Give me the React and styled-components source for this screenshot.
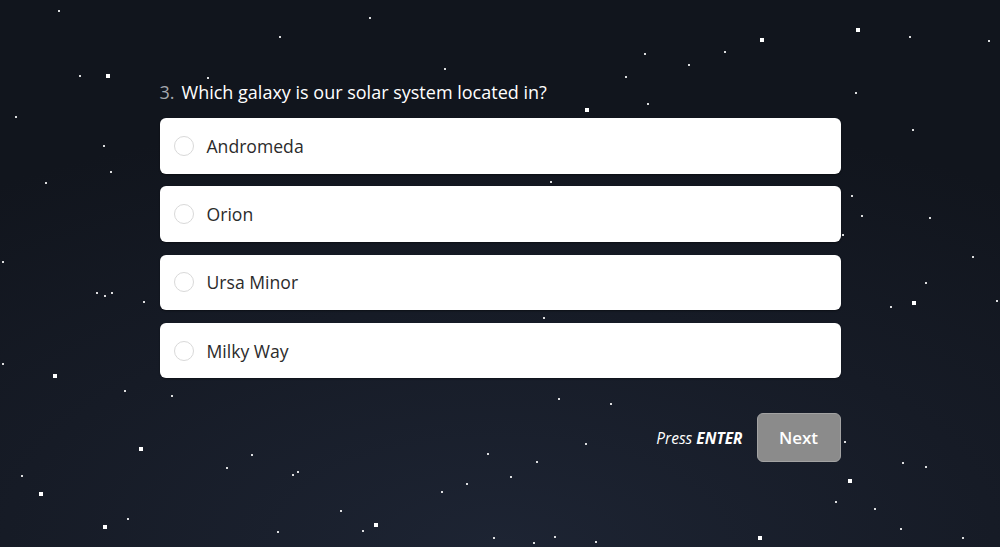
import styled, { createGlobalStyle } from 'styled-components';

const GlobalStyle = createGlobalStyle`
  html, body {
    margin: 0;
    padding: 0;
    height: 100%;
  }
  body {
    font-family: 'Open Sans', 'Liberation Sans', sans-serif;
    background: #12161f;
  }
`;

const Page = styled.div`
  position: relative;
  width: 100%;
  height: 547px;
  overflow: hidden;
  background: radial-gradient(ellipse 90% 80% at 50% 100%, #1d2433 0%, #161b26 55%, #11151d 100%);
`;

const Sky = styled.div`
  position: absolute;
  inset: 0;
  pointer-events: none;
`;

const Star = styled.span`
  position: absolute;
  width: ${(p) => (p.$big ? 4 : 2)}px;
  height: ${(p) => (p.$big ? 4 : 2)}px;
  background: #fff;
  opacity: ${(p) => (p.$big ? 1 : 0.85)};
`;

const Form = styled.div`
  position: relative;
  width: 681px;
  margin: 0 auto;
  padding-top: 80px;
`;

const Question = styled.h2`
  margin: 0 0 14px;
  font-size: 18px;
  line-height: 24px;
  font-weight: 400;
  color: #fff;
`;

const Num = styled.span`
  color: #a4a7ad;
  margin-right: 7px;
`;

const Options = styled.div`
  display: flex;
  flex-direction: column;
  gap: 12.8px;
`;

const Option = styled.label`
  display: flex;
  align-items: center;
  gap: 13px;
  height: 55.5px;
  padding: 0 14px;
  box-sizing: border-box;
  background: #fff;
  border-radius: 6px;
  box-shadow: 0 1px 2px rgba(0, 0, 0, 0.4);
  cursor: pointer;
`;

const Radio = styled.span`
  width: 20px;
  height: 20px;
  box-sizing: border-box;
  border: 1.5px solid #d9d9d9;
  border-radius: 50%;
  flex-shrink: 0;
`;

const OptionText = styled.span`
  font-size: 17.6px;
  color: #2b2b2b;
`;

const Footer = styled.div`
  display: flex;
  justify-content: flex-end;
  align-items: center;
  gap: 14px;
  margin-top: 35px;
`;

const Hint = styled.span`
  font-size: 15.5px;
  font-style: italic;
  color: #fff;

  b {
    font-weight: 700;
  }
`;

const NextButton = styled.button`
  width: 84px;
  height: 49px;
  border: 1px solid #a3a3a3;
  border-radius: 6px;
  background: #8b8b8b;
  color: #fff;
  font-family: inherit;
  font-size: 17px;
  font-weight: 600;
  cursor: pointer;
`;

const stars = [
  [58, 10], [369, 17], [279, 36], [106, 74, 1], [79, 75], [207, 77], [444, 68],
  [15, 116], [103, 145], [110, 171], [45, 182], [2, 261],
  [856, 28, 1], [760, 38, 1], [909, 36], [644, 53], [724, 51], [688, 64],
  [625, 76], [647, 103], [585, 108, 1], [855, 92], [912, 129], [550, 181],
  [851, 195], [861, 215], [929, 217], [842, 234], [972, 256],
  [96, 292], [104, 295], [111, 292], [143, 301], [2, 363], [53, 374, 1],
  [124, 390], [171, 395], [139, 447, 1], [251, 454], [21, 475], [226, 467],
  [292, 474], [297, 471], [39, 492, 1], [103, 525, 1], [127, 518], [277, 531],
  [340, 510], [362, 530], [374, 523, 1], [441, 491], [466, 483], [487, 453],
  [493, 537], [925, 282], [912, 301, 1], [890, 306], [543, 317], [558, 398],
  [610, 403], [585, 443], [536, 461], [510, 476], [844, 441], [902, 462],
  [925, 466], [848, 479, 1], [835, 501], [874, 508], [900, 528], [758, 536, 1],
  [554, 536], [533, 542], [595, 541], [962, 537], [988, 40], [996, 300],
];

const options = ['Andromeda', 'Orion', 'Ursa Minor', 'Milky Way'];

export default function App() {
  return (
    <Page>
      <GlobalStyle />
      <Sky>
        {stars.map(([x, y, big], i) => (
          <Star key={i} $big={!!big} style={{ left: x, top: y }} />
        ))}
      </Sky>
      <Form>
        <Question>
          <Num>3.</Num>Which galaxy is our solar system located in?
        </Question>
        <Options>
          {options.map((o) => (
            <Option key={o}>
              <Radio />
              <OptionText>{o}</OptionText>
            </Option>
          ))}
        </Options>
        <Footer>
          <Hint>
            Press <b>ENTER</b>
          </Hint>
          <NextButton>Next</NextButton>
        </Footer>
      </Form>
    </Page>
  );
}
